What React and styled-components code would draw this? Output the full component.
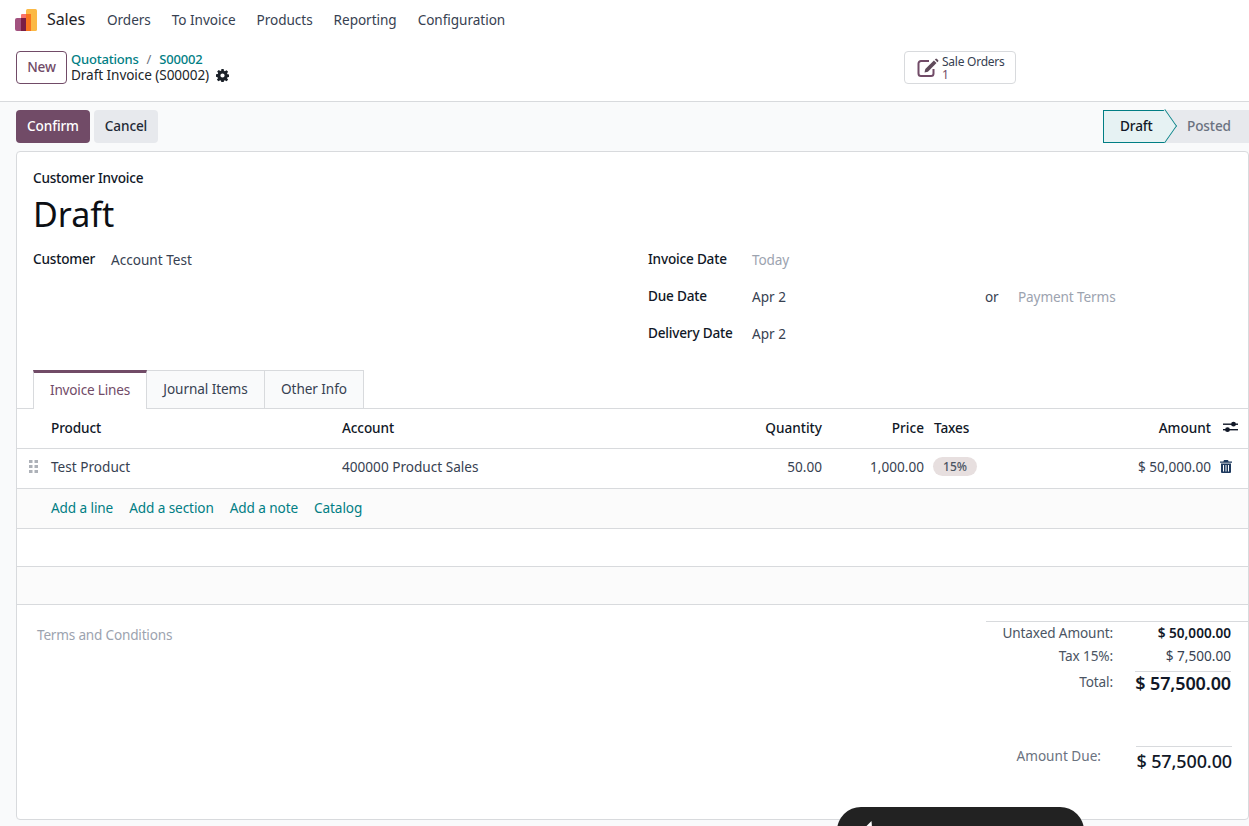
import React from 'react';
import styled, { createGlobalStyle } from 'styled-components';

const GlobalStyle = createGlobalStyle`
    html, body {
        margin: 0;
        padding: 0;
        height: 100%;
        overflow: hidden;
    }
    body {
        font-family: "Noto Sans", "Open Sans", sans-serif;
        font-size: 13.6px;
        letter-spacing: -0.12px;
        color: #212529;
        background: #f9fafb;
    }
`;

const Page = styled.div`
    position: relative;
    height: 826px;
    display: flex;
    flex-direction: column;
    overflow: hidden;
`;

const NavBar = styled.nav`
    height: 40px;
    flex: none;
    display: flex;
    align-items: center;
    padding-left: 15px;
    background: #fff;
`;

const NavLogo = styled.svg`
    flex: none;
`;

const AppName = styled.span`
    font-size: 16px;
    margin-left: 10px;
    margin-right: 22px;
    padding-bottom: 2px;
    color: #1f2327;
`;

const NavItem = styled.span`
    margin-right: 21px;
    padding-bottom: 2px;
    letter-spacing: -0.05px;
    color: #374151;
`;

const ControlPanel = styled.div`
    height: 50px;
    flex: none;
    display: flex;
    background: #fff;
    border-bottom: 1px solid #d8dadd;
    padding: 11px 0 0 16px;
`;

const NewButton = styled.button`
    width: 51px;
    height: 33px;
    box-sizing: border-box;
    border: 1px solid #714b67;
    border-radius: 4px;
    background: #fff;
    color: #714b67;
    font: inherit;
    font-weight: 500;
    letter-spacing: inherit;
    padding: 0 0 2px;
`;

const Breadcrumbs = styled.div`
    flex: none;
    width: 837px;
    box-sizing: border-box;
    padding-left: 4px;
    line-height: 16px;
`;

const CrumbLinks = styled.div`
    display: flex;
    gap: 8px;
    font-size: 13px;
    letter-spacing: -0.2px;
    font-weight: 500;
    color: #017e84;
`;

const CrumbSeparator = styled.span`
    color: #6b7280;
    font-weight: 400;
`;

const CrumbCurrent = styled.div`
    display: flex;
    align-items: center;
    gap: 7px;
    letter-spacing: -0.08px;
    color: #212529;
`;

const StatButton = styled.div`
    display: flex;
    align-items: center;
    width: 112px;
    height: 33px;
    box-sizing: border-box;
    padding-left: 12px;
    gap: 3px;
    border: 1px solid #d8dadd;
    border-radius: 4px;
    background: #fff;
`;

const StatText = styled.div`
    font-size: 12px;
    line-height: 13px;
    letter-spacing: -0.25px;
    color: #374151;
`;

const StatValue = styled.div`
    color: #714b67;
`;

const ActionBar = styled.div`
    height: 49px;
    flex: none;
    display: flex;
    align-items: flex-start;
    padding: 8px 0 0 16px;
    box-sizing: border-box;
    gap: 4px;
`;

const ActionButton = styled.button`
    height: 33px;
    border: none;
    border-radius: 4px;
    padding: 0 0 2px;
    width: ${p => p.$width}px;
    font: inherit;
    font-weight: 500;
    letter-spacing: inherit;
    background: ${p => (p.$primary ? '#714b67' : '#e7e9ed')};
    color: ${p => (p.$primary ? '#fff' : '#1f2937')};
`;

const StatusBar = styled.div`
    display: flex;
    margin-left: auto;
    height: 33px;
`;

const StatusDraft = styled.div`
    position: relative;
    width: 62px;
    box-sizing: border-box;
    padding: 0 0 2px 16px;
    display: flex;
    align-items: center;
    font-weight: 500;
    color: #111827;
    background: #e6f2f3;
    border: 1px solid #017e84;
    border-right: none;
    z-index: 1;
    &::after {
        content: '';
        position: absolute;
        right: -12px;
        top: 3px;
        width: 23px;
        height: 23px;
        background: #e6f2f3;
        border-top: 1px solid #017e84;
        border-right: 1px solid #017e84;
        transform: scaleX(0.7) rotate(45deg);
    }
`;

const StatusPosted = styled.div`
    width: 84px;
    box-sizing: border-box;
    padding: 0 0 2px 22px;
    display: flex;
    align-items: center;
    font-weight: 500;
    color: #6b7280;
    background: #e7e9ed;
`;

const Sheet = styled.div`
    flex: none;
    height: 669px;
    margin-left: 16px;
    box-sizing: border-box;
    background: #fff;
    border: 1px solid #d8dadd;
    border-radius: 4px;
    display: flex;
    flex-direction: column;
`;

const SheetHead = styled.div`
    padding: 17px 16px 0;
`;

const InvoiceType = styled.div`
    font-weight: 500;
    line-height: 17px;
    letter-spacing: -0.25px;
    color: #111827;
`;

const InvoiceName = styled.h1`
    margin: 7px 0 0;
    font-size: 34px;
    line-height: 42px;
    font-weight: 400;
    letter-spacing: 0;
    color: #0c0f14;
`;

const FieldColumns = styled.div`
    display: grid;
    grid-template-columns: 615px 1fr;
    margin-top: 12px;
`;

const FieldRows = styled.div`
    display: flex;
    flex-direction: column;
    gap: 13px;
`;

const Field = styled.div`
    display: flex;
    align-items: center;
    height: 24px;
`;

const FieldLabel = styled.label`
    width: ${p => p.$width}px;
    flex: none;
    font-weight: 500;
    letter-spacing: -0.2px;
    color: #111827;
    position: relative;
    top: -1px;
`;

const FieldValue = styled.span`
    width: ${p => (p.$width ? `${p.$width}px` : 'auto')};
    letter-spacing: ${p => (p.$muted ? '-0.12px' : '0')};
    color: ${p => (p.$muted ? '#9ca3af' : '#374151')};
`;

const OrText = styled.span`
    width: 33px;
    color: #374151;
`;

const Tabs = styled.div`
    display: flex;
    margin-top: 25px;
    padding-left: 16px;
    height: 39px;
    box-sizing: border-box;
    border-bottom: 1px solid #d8dadd;
`;

const Tab = styled.div`
    display: flex;
    align-items: center;
    justify-content: center;
    width: ${p => p.$width}px;
    box-sizing: border-box;
    height: ${p => (p.$active ? 39 : 38)}px;
    padding-bottom: ${p => (p.$active ? 4 : 2)}px;
    letter-spacing: ${p => (p.$active ? '-0.2px' : '-0.08px')};
    background: ${p => (p.$active ? '#fff' : '#f9fafb')};
    color: ${p => (p.$active ? '#714b67' : '#374151')};
    border: 1px solid #d8dadd;
    border-left-width: ${p => (p.$first ? 1 : 0)}px;
    border-top: ${p => (p.$active ? '3px solid #714b67' : '1px solid #d8dadd')};
    border-bottom: none;
`;

const LineRow = styled.div`
    display: grid;
    grid-template-columns: 34px 291px 340px 140px 102px 46px 241px 1fr;
    align-items: center;
    height: 40px;
    padding-bottom: ${p => (p.$head ? 3 : 5)}px;
    box-sizing: border-box;
    border-bottom: 1px solid #d8dadd;
    letter-spacing: ${p => (p.$head ? '-0.12px' : '0')};
    font-weight: ${p => (p.$head ? 500 : 400)};
    color: ${p => (p.$head ? '#111827' : '#374151')};
`;

const Cell = styled.div`
    text-align: ${p => (p.$right ? 'right' : 'left')};
    ${p => p.$right && 'letter-spacing: 0;'}
`;

const TaxCell = styled.div`
    padding-left: 10px;
`;

const IconCell = styled.div`
    display: flex;
    padding-left: ${p => p.$inset}px;
`;

const TaxBadge = styled.span`
    display: inline-block;
    width: 44px;
    height: 19px;
    margin-left: -1px;
    line-height: 19px;
    text-align: center;
    border-radius: 10px;
    background: #e7dfdf;
    color: #4b5563;
    font-size: 12px;
    font-weight: 500;
`;

const AddRow = styled.div`
    display: flex;
    align-items: center;
    gap: 16px;
    height: 40px;
    padding: 0 0 2px 34px;
    box-sizing: border-box;
    letter-spacing: -0.1px;
    background: #fbfbfb;
    border-bottom: 1px solid #d8dadd;
    color: #017e84;
`;

const EmptyRow = styled.div`
    height: 38px;
    box-sizing: border-box;
    flex: none;
    background: ${p => (p.$shaded ? '#fbfbfb' : '#fff')};
    border-bottom: 1px solid #d8dadd;
`;

const Footer = styled.div`
    display: flex;
    justify-content: space-between;
    flex: 1;
    padding: 16px 0 0 20px;
`;

const Terms = styled.div`
    margin-top: 4px;
    letter-spacing: -0.2px;
    color: #9ca3af;
`;

const Totals = styled.div`
    width: 262px;
    box-sizing: border-box;
    padding-right: 17px;
    border-top: 1px solid #d8dadd;
`;

const TotalRow = styled.div`
    display: grid;
    grid-template-columns: 127px 96px;
    column-gap: 22px;
    height: ${p => p.$height}px;
    padding-top: ${p => p.$pad || 0}px;
    box-sizing: border-box;
    align-items: start;
    line-height: 20px;
`;

const TotalLabel = styled.div`
    text-align: right;
    padding-top: ${p => p.$pad || 0}px;
    color: #4b5563;
`;

const TotalValue = styled.div`
    text-align: right;
    white-space: nowrap;
    font-weight: ${p => (p.$bold ? 600 : 400)};
    font-size: ${p => p.$size || 13.6}px;
    line-height: ${p => (p.$rule ? 22 : 20)}px;
    letter-spacing: ${p => (p.$rule ? '-0.12px' : '0')};
    color: ${p => (p.$bold ? '#111827' : '#374151')};
    border-top: ${p => (p.$rule ? '1px solid #d8dadd' : 'none')};
`;

const DueRow = styled.div`
    display: flex;
    justify-content: flex-end;
    margin-top: 47px;
`;

const DueLabel = styled.div`
    color: #6b7280;
    margin-right: 35px;
    line-height: 20px;
    letter-spacing: 0;
`;

const DueValue = styled.div`
    width: 96px;
    margin-right: -1px;
    text-align: right;
    white-space: nowrap;
    border-top: 1px solid #d8dadd;
    font-size: 18px;
    font-weight: 500;
    line-height: 28px;
    color: #111827;
`;

const FloatingPill = styled.div`
    position: absolute;
    left: 837px;
    top: 807px;
    width: 247px;
    height: 60px;
    border-radius: 24px;
    background: #222;
`;

const PillGlyph = styled.svg`
    position: absolute;
    left: 29px;
    top: 14px;
`;

const SalesLogo = () => (
    <NavLogo width="22" height="22" viewBox="0 0 22 22">
        <rect x="11" y="0" width="11" height="22" rx="1.5" fill="#fbb945" />
        <rect x="6" y="5" width="10" height="17" rx="1" fill="#f9736b" />
        <rect x="11" y="5" width="5" height="17" fill="#f9741f" />
        <rect x="0" y="9" width="11" height="13" rx="2" fill="#a2527f" />
        <rect x="6" y="9" width="5" height="13" fill="#7b1e45" />
    </NavLogo>
);

const GearIcon = () => (
    <svg width="13" height="13" viewBox="0 0 16 16" fill="#1a2028">
        <path fillRule="evenodd" d="M6.6 0h2.8l.4 2.2 1.2.5 1.9-1.3 2 2-1.3 1.9.5 1.2 2.2.4v2.8l-2.2.4-.5 1.2 1.3 1.9-2 2-1.9-1.3-1.2.5-.4 2.2H6.6l-.4-2.2-1.2-.5-1.9 1.3-2-2 1.3-1.9-.5-1.2L0 9.4V6.6l2.2-.4.5-1.2-1.3-1.9 2-2 1.9 1.3 1.2-.5zM8 5.4a2.6 2.6 0 1 0 0 5.2 2.6 2.6 0 0 0 0-5.2z" />
    </svg>
);

const EditIcon = () => (
    <svg width="22" height="20" viewBox="0 0 22 20" fill="none">
        <path d="M12 3H4a2.5 2.5 0 0 0-2.5 2.5v10A2.5 2.5 0 0 0 4 18h10a2.5 2.5 0 0 0 2.5-2.5V11" stroke="#714b67" strokeWidth="2" />
        <path d="M7.5 14.5l.8-3.4 8.6-8.6 2.6 2.6-8.6 8.6z" fill="#5f4a5a" />
        <path d="M17.8 1.6l.7-.7a1 1 0 0 1 1.4 0l1.2 1.2a1 1 0 0 1 0 1.4l-.7.7z" fill="#5f4a5a" />
    </svg>
);

const DragHandle = () => (
    <svg width="10" height="13" viewBox="0 0 10 13" fill="#adb1b8">
        <rect x="0" y="0" width="3.5" height="3" />
        <rect x="5.5" y="0" width="3.5" height="3" />
        <rect x="0" y="5" width="3.5" height="3" />
        <rect x="5.5" y="5" width="3.5" height="3" />
        <rect x="0" y="10" width="3.5" height="3" />
        <rect x="5.5" y="10" width="3.5" height="3" />
    </svg>
);

const SlidersIcon = () => (
    <svg width="15" height="12" viewBox="0 0 15 12" fill="#111827">
        <rect x="0" y="2.5" width="15" height="1.4" />
        <rect x="0" y="8" width="15" height="1.4" />
        <circle cx="10.5" cy="3.2" r="2.4" />
        <circle cx="4.5" cy="8.7" r="2.4" />
    </svg>
);

const TrashIcon = () => (
    <svg width="12" height="13" viewBox="0 0 12 13" fill="#1e3a5f">
        <path d="M4 0h4l.6 1.4H12v1.4H0V1.4h3.4z" />
        <path fillRule="evenodd" d="M1 3.6h10V12a1 1 0 0 1-1 1H2a1 1 0 0 1-1-1zM3 5v6.5h1V5zm2.5 0v6.5h1V5zM8 5v6.5h1V5z" />
    </svg>
);

const App = () => (
    <Page>
        <GlobalStyle />
        <NavBar>
            <SalesLogo />
            <AppName>Sales</AppName>
            <NavItem>Orders</NavItem>
            <NavItem>To Invoice</NavItem>
            <NavItem>Products</NavItem>
            <NavItem>Reporting</NavItem>
            <NavItem>Configuration</NavItem>
        </NavBar>
        <ControlPanel>
            <NewButton>New</NewButton>
            <Breadcrumbs>
                <CrumbLinks>
                    <span>Quotations</span>
                    <CrumbSeparator>/</CrumbSeparator>
                    <span>S00002</span>
                </CrumbLinks>
                <CrumbCurrent>
                    Draft Invoice (S00002)
                    <GearIcon />
                </CrumbCurrent>
            </Breadcrumbs>
            <StatButton>
                <EditIcon />
                <StatText>
                    Sale Orders
                    <StatValue>1</StatValue>
                </StatText>
            </StatButton>
        </ControlPanel>
        <ActionBar>
            <ActionButton $primary $width={74}>Confirm</ActionButton>
            <ActionButton $width={64}>Cancel</ActionButton>
            <StatusBar>
                <StatusDraft>Draft</StatusDraft>
                <StatusPosted>Posted</StatusPosted>
            </StatusBar>
        </ActionBar>
        <Sheet>
            <SheetHead>
                <InvoiceType>Customer Invoice</InvoiceType>
                <InvoiceName>Draft</InvoiceName>
                <FieldColumns>
                    <FieldRows>
                        <Field>
                            <FieldLabel $width={78}>Customer</FieldLabel>
                            <FieldValue>Account Test</FieldValue>
                        </Field>
                    </FieldRows>
                    <FieldRows>
                        <Field>
                            <FieldLabel $width={104}>Invoice Date</FieldLabel>
                            <FieldValue $muted>Today</FieldValue>
                        </Field>
                        <Field>
                            <FieldLabel $width={104}>Due Date</FieldLabel>
                            <FieldValue $width={233}>Apr 2</FieldValue>
                            <OrText>or</OrText>
                            <FieldValue $muted>Payment Terms</FieldValue>
                        </Field>
                        <Field>
                            <FieldLabel $width={104}>Delivery Date</FieldLabel>
                            <FieldValue>Apr 2</FieldValue>
                        </Field>
                    </FieldRows>
                </FieldColumns>
            </SheetHead>
            <Tabs>
                <Tab $active $first $width={114}>Invoice Lines</Tab>
                <Tab $width={118}>Journal Items</Tab>
                <Tab $width={99}>Other Info</Tab>
            </Tabs>
            <LineRow $head>
                <span />
                <Cell>Product</Cell>
                <Cell>Account</Cell>
                <Cell $right>Quantity</Cell>
                <Cell $right>Price</Cell>
                <TaxCell>Taxes</TaxCell>
                <Cell $right>Amount</Cell>
                <IconCell $inset={12}><SlidersIcon /></IconCell>
            </LineRow>
            <LineRow>
                <IconCell $inset={12}><DragHandle /></IconCell>
                <Cell>Test Product</Cell>
                <Cell>400000 Product Sales</Cell>
                <Cell $right>50.00</Cell>
                <Cell $right>1,000.00</Cell>
                <TaxCell><TaxBadge>15%</TaxBadge></TaxCell>
                <Cell $right>$ 50,000.00</Cell>
                <IconCell $inset={9}><TrashIcon /></IconCell>
            </LineRow>
            <AddRow>
                <span>Add a line</span>
                <span>Add a section</span>
                <span>Add a note</span>
                <span>Catalog</span>
            </AddRow>
            <EmptyRow />
            <EmptyRow $shaded />
            <Footer>
                <Terms>Terms and Conditions</Terms>
                <Totals>
                    <TotalRow $height={23} $pad={1}>
                        <TotalLabel>Untaxed Amount:</TotalLabel>
                        <TotalValue $bold>$ 50,000.00</TotalValue>
                    </TotalRow>
                    <TotalRow $height={26} $pad={1}>
                        <TotalLabel>Tax 15%:</TotalLabel>
                        <TotalValue>$ 7,500.00</TotalValue>
                    </TotalRow>
                    <TotalRow $height={28}>
                        <TotalLabel $pad={1}>Total:</TotalLabel>
                        <TotalValue $bold $size={18} $rule>$ 57,500.00</TotalValue>
                    </TotalRow>
                    <DueRow>
                        <DueLabel>Amount Due:</DueLabel>
                        <DueValue>$ 57,500.00</DueValue>
                    </DueRow>
                </Totals>
            </Footer>
        </Sheet>
        <FloatingPill>
            <PillGlyph width="7" height="6" viewBox="0 0 7 6" fill="#fff">
                <path d="M5.5 0L0 5.5V6h6z" />
            </PillGlyph>
        </FloatingPill>
    </Page>
);

export default App;
